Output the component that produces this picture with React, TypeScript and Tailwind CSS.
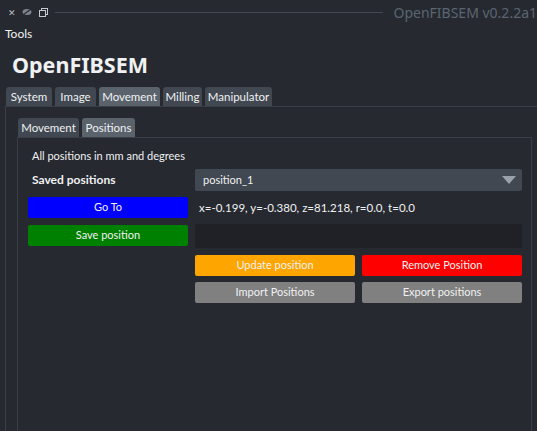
import React from 'react';

const font = { fontFamily: 'Lato, "Noto Sans", sans-serif' };

function Tab({ label, active, w }: { label: string; active?: boolean; w: string }) {
    return (
        <div
            className={`${w} flex h-[19px] items-center justify-center rounded-t-[3px] text-[11.5px] text-[#f0f1f2] ${
                active ? 'bg-[#5a626c]' : 'bg-[#414851]'
            }`}
        >
            {label}
        </div>
    );
}

function Btn({ label, color }: { label: string; color: string }) {
    return (
        <div className={`${color} flex h-[21px] items-center justify-center rounded-[2px] text-[11px] text-[#f0f1f2]`}>
            {label}
        </div>
    );
}

export default function App() {
    return (
        <div className="flex h-[431px] w-[537px] flex-col overflow-hidden bg-[#262930] text-[#f0f1f2]" style={font}>
            {/* title bar */}
            <div className="flex h-[24px] items-center pl-[8px]">
                <span className="text-[9px] leading-none text-[#b9bec4]">✕</span>
                <svg width="10" height="8" viewBox="0 0 10 8" className="ml-[6px]">
                    <ellipse cx="5" cy="4" rx="4.5" ry="3" fill="#7d848d" />
                    <line x1="1" y1="7" x2="9" y2="1" stroke="#262930" strokeWidth="1.2" />
                </svg>
                <svg width="9" height="9" viewBox="0 0 9 9" className="ml-[7px]">
                    <rect x="2.5" y="0.5" width="6" height="6" fill="none" stroke="#c5c9ce" />
                    <rect x="0.5" y="2.5" width="6" height="6" fill="#262930" stroke="#c5c9ce" />
                </svg>
                <div className="ml-[7px] h-px flex-1 bg-[#414851]" />
                <span
                    className="ml-[10px] whitespace-nowrap text-[14px] text-[#5b6572]"
                    style={{ fontFamily: '"Noto Sans", sans-serif' }}
                >
                    OpenFIBSEM v0.2.2a1
                </span>
            </div>

            <div className="h-[20px] pl-[5px] text-[12px] leading-[20px]">Tools</div>

            <div
                className="flex h-[43px] items-center pl-[12px] text-[21.5px] font-bold"
                style={{ fontFamily: '"Noto Sans", sans-serif' }}
            >
                OpenFIBSEM
            </div>

            {/* main tabs */}
            <div className="flex gap-[3px] pl-[6px]">
                <Tab label="System" w="w-[46px]" />
                <Tab label="Image" w="w-[41px]" />
                <Tab label="Movement" w="w-[61px]" active />
                <Tab label="Milling" w="w-[39px]" />
                <Tab label="Manipulator" w="w-[67px]" />
            </div>

            <div className="ml-[5px] flex flex-1 flex-col border-l border-t border-[#3a3f47] pl-[11px] pt-[11px]">
                <div className="flex gap-[3px] pl-[1px]">
                    <Tab label="Movement" w="w-[61px]" />
                    <Tab label="Positions" w="w-[53px]" active />
                </div>
                <div className="mr-[5px] flex flex-1 flex-col border-l border-r border-t border-[#3a3f47] pl-[10px] pr-[9px] pt-[10px]">
                    <div className="pl-[4px] text-[11px] leading-[16px]">All positions in mm and degrees</div>

                    <div className="mt-[5px] grid grid-cols-[160px_1fr] gap-x-[7px]">
                        <div className="flex h-[22px] items-center pl-[4px] text-[12px] font-bold">Saved positions</div>
                        <div className="flex h-[22px] items-center justify-between rounded-[2px] bg-[#414851] pl-[8px] pr-[6px] text-[11px]">
                            position_1
                            <svg width="14" height="8" viewBox="0 0 14 8">
                                <polygon points="0,0 14,0 7,8" fill="#9aa1a9" />
                            </svg>
                        </div>

                        <div className="mt-[6px]">
                            <Btn label="Go To" color="bg-[#0000ff]" />
                        </div>
                        <div className="mt-[6px] flex h-[21px] items-center pl-[4px] text-[11.5px]">
                            x=-0.199, y=-0.380, z=81.218, r=0.0, t=0.0
                        </div>

                        <div className="mt-[7px]">
                            <Btn label="Save position" color="bg-[#008000]" />
                        </div>
                        <div className="mt-[6px] h-[24px] rounded-[2px] bg-[#1f2126]" />

                        <div />
                        <div className="mt-[7px] grid grid-cols-2 gap-x-[7px] gap-y-[6px]">
                            <Btn label="Update position" color="bg-[#ffa500]" />
                            <Btn label="Remove Position" color="bg-[#ff0000]" />
                            <Btn label="Import Positions" color="bg-[#808080]" />
                            <Btn label="Export positions" color="bg-[#808080]" />
                        </div>
                    </div>
                </div>
            </div>
        </div>
    );
}
